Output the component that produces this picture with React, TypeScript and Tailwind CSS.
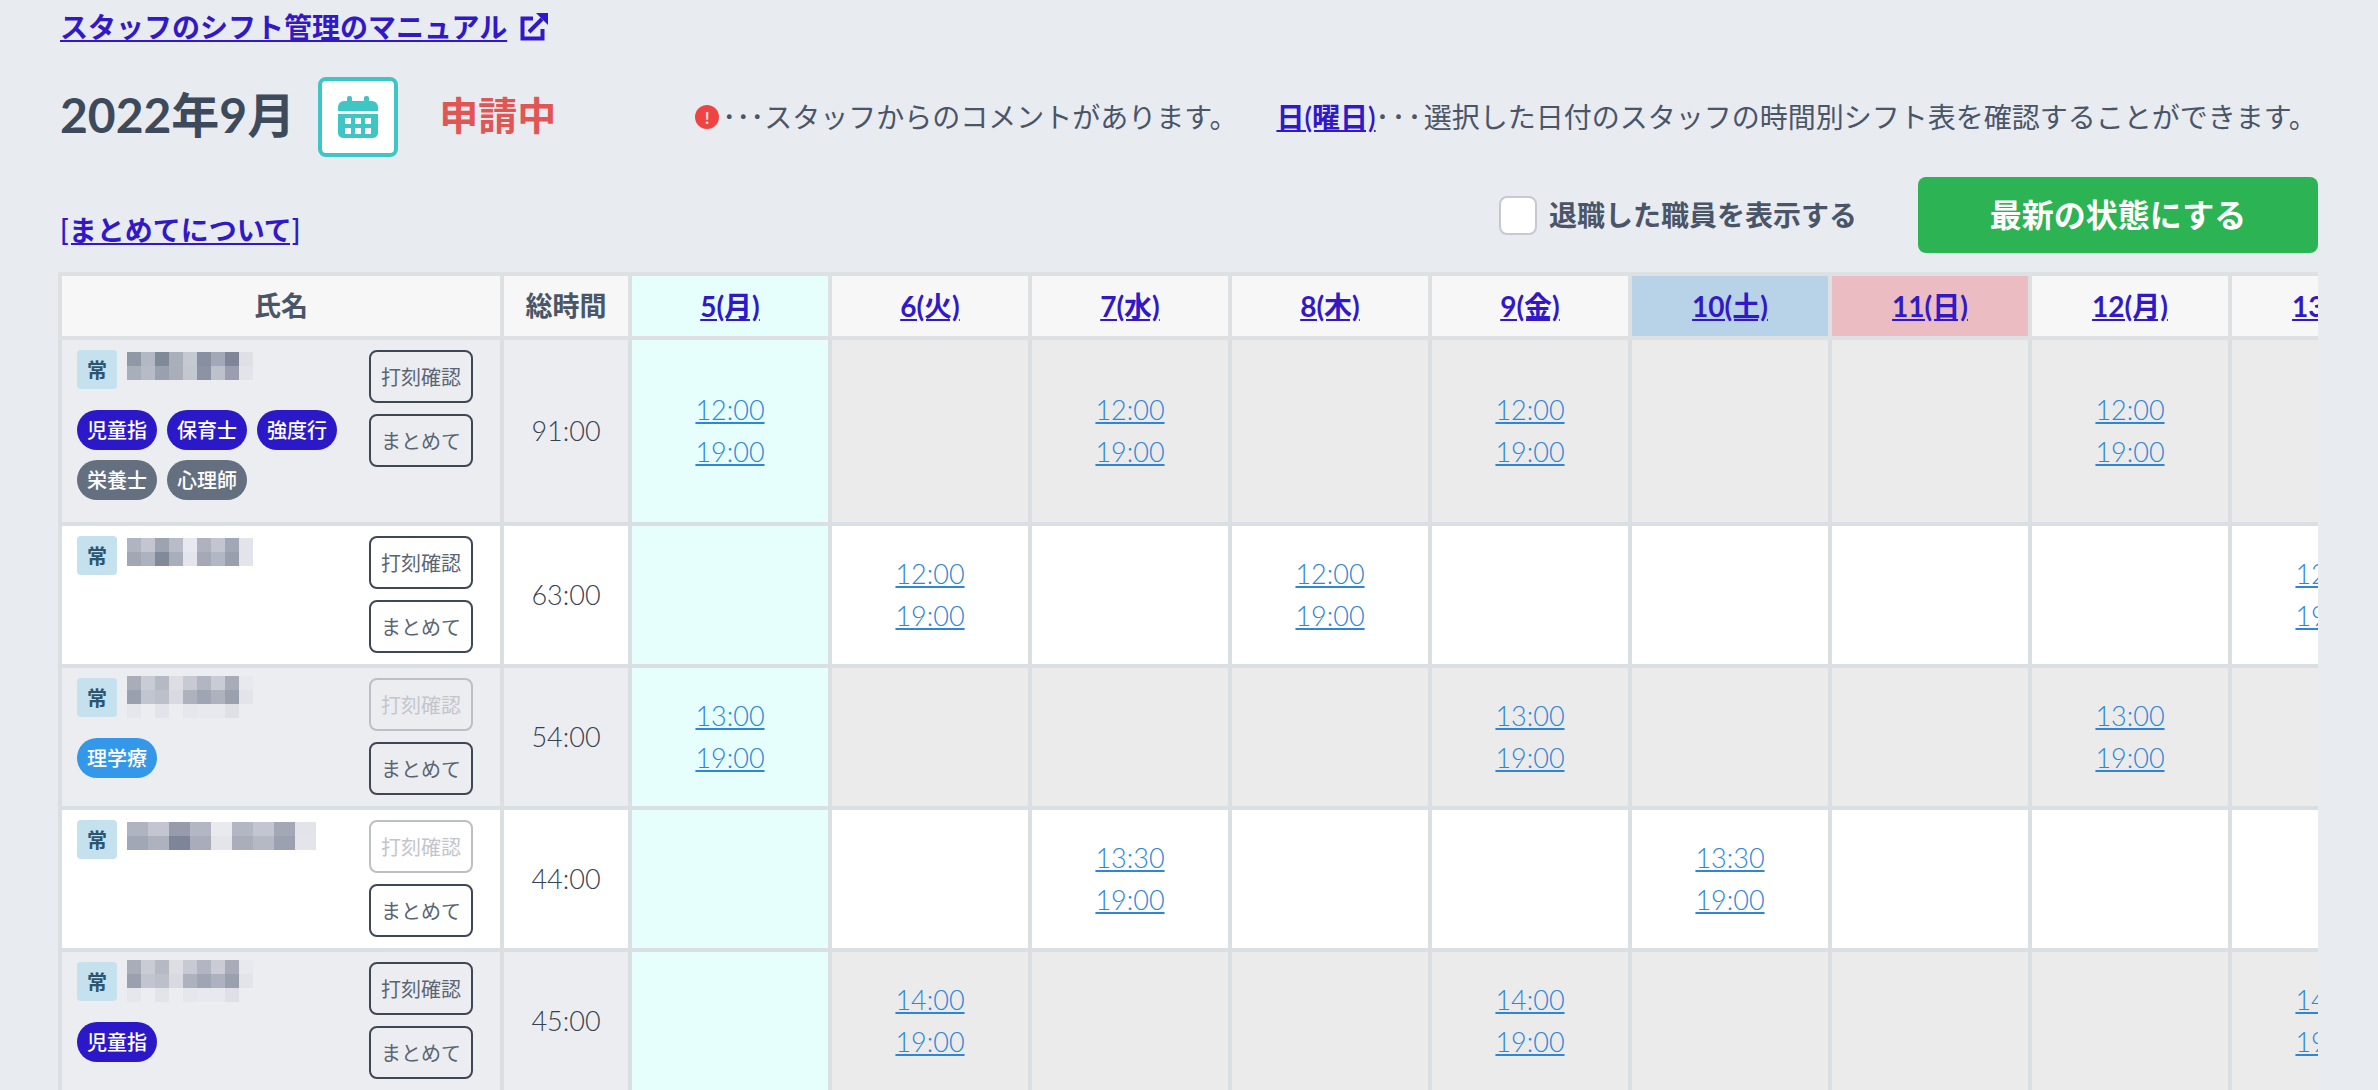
import { Fragment } from 'react'

type Tag = { label: string; color: string }
type Staff = {
  mosaic: string[][]
  mosaicWide?: boolean
  tags: Tag[]
  total: string
  stampDisabled?: boolean
  start: string
  days: number[]
  shaded: boolean
  rowHeight: string
}

const INDIGO = 'bg-[#2b19c9]'
const SLATE = 'bg-[#64707f]'
const SKY = 'bg-[#3498ea]'

const days = [
  { day: 5, label: '5(月)', head: 'bg-[#e6fffd]' },
  { day: 6, label: '6(火)', head: 'bg-[#f7f7f7]' },
  { day: 7, label: '7(水)', head: 'bg-[#f7f7f7]' },
  { day: 8, label: '8(木)', head: 'bg-[#f7f7f7]' },
  { day: 9, label: '9(金)', head: 'bg-[#f7f7f7]' },
  { day: 10, label: '10(土)', head: 'bg-[#b8d2e8]' },
  { day: 11, label: '11(日)', head: 'bg-[#ebbcc1]' },
  { day: 12, label: '12(月)', head: 'bg-[#f7f7f7]' },
  { day: 13, label: '13(火)', head: 'bg-[#f7f7f7]' },
]

const staff: Staff[] = [
  {
    mosaic: [
      ['#8f98a6', '#b3b9c4', '#7f8a98', '#a9afbb', '#c5c9d2', '#888fa1', '#a3a8b8', '#7f8698', '#dfe0e5'],
      ['#a8aeba', '#b6bbc6', '#9aa0ae', '#a9aeba', '#c3c7d0', '#8d92a5', '#bcc1ca', '#9a9eb0', '#e3e4e9'],
    ],
    tags: [
      { label: '児童指', color: INDIGO },
      { label: '保育士', color: INDIGO },
      { label: '強度行', color: INDIGO },
      { label: '栄養士', color: SLATE },
      { label: '心理師', color: SLATE },
    ],
    total: '91:00',
    start: '12:00',
    days: [5, 7, 9, 12],
    shaded: true,
    rowHeight: 'h-[186px]',
  },
  {
    mosaic: [
      ['#b0b4c0', '#c3c6d0', '#9ea3b2', '#b9bcc8', '#e8e9f0', '#aeb2bf', '#c3c6d1', '#a3a7b5', '#e3e4ea'],
      ['#a2a7b4', '#aeb2be', '#808a9a', '#a9aebb', '#e4e5ec', '#a5a9b7', '#b3b7c3', '#9a9fae', '#e3e4ea'],
    ],
    tags: [],
    total: '63:00',
    start: '12:00',
    days: [6, 8, 13],
    shaded: false,
    rowHeight: 'h-[142px]',
  },
  {
    mosaic: [
      ['#a8adb9', '#c9ccd5', '#b5b9c3', '#dcdee4', '#c7cad3', '#b2b6c2', '#c9ccd5', '#a8acb9', '#e8e9ed'],
      ['#9aa0ad', '#c1c5cf', '#bcc0cb', '#d8dae1', '#aeb2be', '#a0a5b3', '#aeb2bf', '#9aa0ae', '#e3e4e9'],
      ['#e6e7ec', '#ecedf1', '#e3e4ea', '#ecedf1', '#e6e7ec', '#e8e9ee', '#e8e9ee', '#dfe0e6', '#ecedf1'],
    ],
    tags: [{ label: '理学療', color: SKY }],
    total: '54:00',
    stampDisabled: true,
    start: '13:00',
    days: [5, 9, 12],
    shaded: true,
    rowHeight: 'h-[142px]',
  },
  {
    mosaic: [
      ['#b0b4c0', '#c3c6d0', '#979cac', '#b3b7c3', '#e8eaee', '#b3b7c3', '#c3c6d0', '#a3a7b6', '#e3e4e9'],
      ['#a2a7b5', '#aeb2be', '#7e8598', '#a8adb9', '#e3e5ea', '#aaaebb', '#b5b9c4', '#9ca1b1', '#e3e5ea'],
    ],
    mosaicWide: true,
    tags: [],
    total: '44:00',
    stampDisabled: true,
    start: '13:30',
    days: [7, 10],
    shaded: false,
    rowHeight: 'h-[142px]',
  },
  {
    mosaic: [
      ['#a8adb9', '#c9ccd5', '#b5b9c3', '#dcdee4', '#c7cad3', '#b2b6c2', '#c9ccd5', '#a8acb9', '#e8e9ed'],
      ['#9aa0ad', '#c1c5cf', '#bcc0cb', '#d8dae1', '#aeb2be', '#a0a5b3', '#aeb2bf', '#9aa0ae', '#e3e4e9'],
      ['#e6e7ec', '#ecedf1', '#e3e4ea', '#ecedf1', '#e6e7ec', '#e8e9ee', '#e8e9ee', '#dfe0e6', '#ecedf1'],
    ],
    tags: [{ label: '児童指', color: INDIGO }],
    total: '45:00',
    start: '14:00',
    days: [6, 9, 13],
    shaded: true,
    rowHeight: 'h-[142px]',
  },
]

function CalendarIcon() {
  return (
    <svg width="40" height="42" viewBox="0 0 40 42" className="text-[#3fc6c4]" fill="currentColor">
      <rect x="9" y="0" width="5" height="8" rx="2" />
      <rect x="26" y="0" width="5" height="8" rx="2" />
      <path d="M0 15v-4a6 6 0 0 1 6-6h28a6 6 0 0 1 6 6v4z" />
      <path
        fillRule="evenodd"
        d="M0 18h40v19a5 5 0 0 1-5 5H5a5 5 0 0 1-5-5zM7 22v6h6v-6zM17 22v6h6v-6zM27 22v6h6v-6zM7 32v6h6v-6zM17 32v6h6v-6zM27 32v6h6v-6z"
      />
    </svg>
  )
}

function ExternalIcon() {
  return (
    <svg width="30" height="30" viewBox="0 0 30 30" fill="none" stroke="#3219c8" strokeWidth="4">
      <path d="M14 6.5H3.5v20h20V17" />
      <path d="M10 20 23 7" />
      <path d="M17 1h12v12z" stroke="none" fill="#3219c8" />
    </svg>
  )
}

function AlertDot() {
  return (
    <span className="flex h-6 w-6 shrink-0 items-center justify-center rounded-full bg-[#ee4444] text-[17px] font-bold leading-none text-[#ffd9d9]">
      !
    </span>
  )
}

// 名前はモザイクで隠れているので色ブロックのまま描く
function Mosaic({ rows, wide }: { rows: string[][]; wide?: boolean }) {
  const w = wide ? 21 : 14
  const h = 14
  return (
    <svg
      width={w * 9}
      height={h * rows.length}
      shapeRendering="crispEdges"
      className="shrink-0 blur-[0.5px]"
    >
      {rows.map((row, y) =>
        row.map((c, x) => <rect key={`${x}-${y}`} x={x * w} y={y * h} width={w} height={h} fill={c} />),
      )}
    </svg>
  )
}

function SmallButton({ label, disabled }: { label: string; disabled?: boolean }) {
  return (
    <button
      className={`h-[53px] w-[104px] rounded-lg border-[2.5px] text-[20px] ${
        disabled ? 'border-[#bcbfc5] text-[#c3c5cb]' : 'border-[#3d4755] text-[#5a6472]'
      }`}
    >
      {label}
    </button>
  )
}

function Row({ s }: { s: Staff }) {
  const bg = s.shaded ? 'bg-[#ecedf1]' : 'bg-white'
  const dayBg = s.shaded ? 'bg-[#ebebec]' : 'bg-white'
  return (
    <tr className={s.rowHeight}>
      <td className={`border-[4px] border-[#d9dfe2] pb-2 pl-[15px] pr-[27px] pt-[10px] align-top ${bg}`}>
        <div className="flex justify-between">
          <div className="w-[270px]">
            <div className="flex h-[39px] items-start gap-[10px]">
              <span className="flex h-[39px] w-10 shrink-0 items-center justify-center rounded bg-[#c5e1ee] text-[20px] font-bold text-[#2c5570]">
                常
              </span>
              <div className={s.mosaic.length > 2 ? '-mt-[2px]' : 'mt-[2px]'}>
                <Mosaic rows={s.mosaic} wide={s.mosaicWide} />
              </div>
            </div>
            {s.tags.length > 0 && (
              <div className="mt-[21px] flex flex-wrap gap-x-[10px] gap-y-[10px]">
                {s.tags.map((t, i) => (
                  <span
                    key={i}
                    className={`flex h-10 w-20 items-center justify-center rounded-full text-[20px] font-medium text-white ${t.color}`}
                  >
                    {t.label}
                  </span>
                ))}
              </div>
            )}
          </div>
          <div className="flex shrink-0 flex-col gap-[11px]">
            <SmallButton label="打刻確認" disabled={s.stampDisabled} />
            <SmallButton label="まとめて" />
          </div>
        </div>
      </td>
      <td className={`border-[4px] border-[#d9dfe2] text-center text-[27px] font-light text-[#36414f] ${bg}`}>
        {s.total}
      </td>
      {days.map((d) => (
        <td
          key={d.day}
          className={`border-[4px] border-[#d9dfe2] text-center text-[27px] font-light leading-[42px] ${
            d.day === 5 ? 'bg-[#e6fffd]' : dayBg
          }`}
        >
          {s.days.includes(d.day) && (
            <Fragment>
              <a className="block text-[#2f86d8] underline">{s.start}</a>
              <a className="block text-[#2f86d8] underline">19:00</a>
            </Fragment>
          )}
        </td>
      ))}
    </tr>
  )
}

export default function App() {
  return (
    <div className="h-[1090px] overflow-hidden bg-[#e8ebf0] px-[60px] pt-[10px] font-[family-name:Lato,'Noto_Sans_CJK_JP',sans-serif] text-[#4a5568]">
      <div className="flex h-[34px] items-center gap-3">
        <a className="text-[28px] font-semibold leading-[34px] text-[#3219c8] underline">
          スタッフのシフト管理のマニュアル
        </a>
        <ExternalIcon />
      </div>

      <div className="mt-[33px] flex h-20 items-center">
        <h1 className="mb-1 text-[48px] font-bold text-[#3d4a5c]">2022年9月</h1>
        <button className="ml-[23px] flex h-20 w-20 items-center justify-center rounded-lg border-4 border-[#3fc6c4] bg-white">
          <CalendarIcon />
        </button>
        <span className="mb-1 ml-[41px] text-[39px] font-bold text-[#e25555]">申請中</span>
        <div className="ml-[139px] flex items-center text-[28px]">
          <AlertDot />
          <span className="ml-[3px]">･･･スタッフからのコメントがあります。</span>
          <a className="ml-[39px] font-semibold text-[#3219c8] underline">日(曜日)</a>
          <span className="tracking-[2px]">･･･</span>
          <span>選択した日付のスタッフの時間別シフト表を確認することができます。</span>
        </div>
      </div>

      <div className="mt-5 flex h-[76px] items-end justify-between">
        <a className="pb-[2px] text-[28px] font-semibold text-[#3219c8] underline">[まとめてについて]</a>
        <div className="flex items-center self-stretch">
          <span className="h-[39px] w-[38px] rounded-lg border-2 border-[#c6cad0] bg-white" />
          <span className="ml-3 text-[28px] font-bold">退職した職員を表示する</span>
          <button className="ml-[61px] h-[76px] w-[400px] rounded-lg bg-[#2cb354] text-[32px] font-bold text-white">
            最新の状態にする
          </button>
        </div>
      </div>

      <div className="-ml-[2px] mt-[19px] overflow-hidden">
        <table className="w-[2370px] table-fixed border-collapse">
          <colgroup>
            <col className="w-[442px]" />
            <col className="w-[128px]" />
            {days.map((d) => (
              <col key={d.day} className="w-[200px]" />
            ))}
          </colgroup>
          <thead>
            <tr className="h-[64px]">
              <th className="border-[4px] border-[#dde1e4] bg-[#f7f7f7] text-[27px] font-bold">氏名</th>
              <th className="border-[4px] border-[#dde1e4] bg-[#f7f7f7] text-[27px] font-bold">総時間</th>
              {days.map((d) => (
                <th key={d.day} className={`border-[4px] border-[#dde1e4] text-[28px] font-bold ${d.head}`}>
                  <a className="text-[#3219c8] underline">{d.label}</a>
                </th>
              ))}
            </tr>
          </thead>
          <tbody>
            {staff.map((s, i) => (
              <Row key={i} s={s} />
            ))}
          </tbody>
        </table>
      </div>
    </div>
  )
}
